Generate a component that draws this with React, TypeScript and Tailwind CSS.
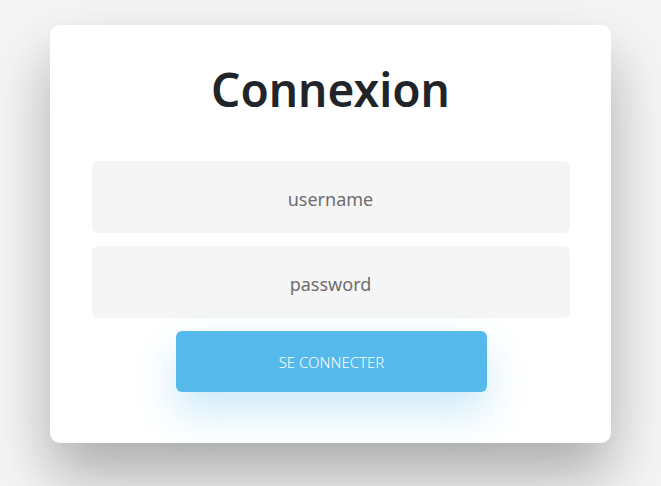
export default function App(): JSX.Element {
  return (
    <div className="min-h-screen w-full bg-[#f5f5f5] pt-[25px] pl-[50px] font-['Noto_Sans',sans-serif]">
      <div className="w-[561px] h-[418px] bg-white rounded-[10px] shadow-[0_32px_60px_rgba(0,0,0,0.3)] flex flex-col items-center pt-[34px]">
        <h1 className="h-[60px] flex items-center text-[46px] font-semibold text-[#212529] leading-none">
          Connexion
        </h1>

        <div className="mt-[42px] w-[478px] flex flex-col gap-[13px]">
          <input
            placeholder="username"
            className="h-[72px] w-full rounded-[6px] bg-[#f5f5f5] pt-[3px] text-center text-[18px] text-[#555] placeholder:text-[#6e6e6e] outline-none"
          />
          <input
            type="password"
            placeholder="password"
            className="h-[72px] w-full rounded-[6px] bg-[#f5f5f5] pt-[3px] text-center text-[18px] text-[#555] placeholder:text-[#6e6e6e] outline-none"
          />
        </div>

        <button className="mt-[13px] ml-[2px] w-[311px] h-[61px] rounded-[6px] bg-[#56b9ec] pt-[2px] text-white text-[15px] font-light uppercase shadow-[0_20px_40px_rgba(86,185,236,0.3)]">
          Se connecter
        </button>
      </div>
    </div>
  );
}
